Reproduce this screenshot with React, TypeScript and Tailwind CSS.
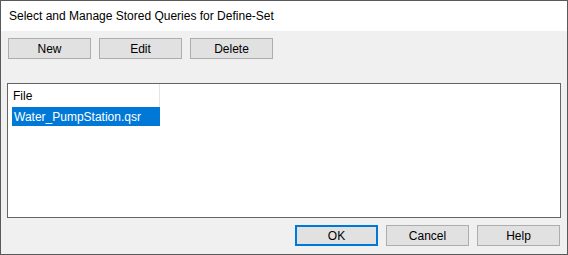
import type { ReactNode } from "react";

function DlgButton({
  children,
  focused = false,
}: {
  children: ReactNode;
  focused?: boolean;
}) {
  return (
    <button
      className={
        focused
          ? "w-[83px] h-[21px] bg-[#e1e1e1] border-2 border-[#0078d7] text-[12px] text-black leading-none flex items-center justify-center"
          : "w-[83px] h-[21px] bg-[#e1e1e1] border border-[#adadad] text-[12px] text-black leading-none flex items-center justify-center"
      }
    >
      {children}
    </button>
  );
}

export default function App() {
  return (
    <div
      className="w-[568px] h-[255px] border border-[#595959] bg-[#f0f0f0] flex flex-col"
      style={{ fontFamily: '"Liberation Sans", Arial, sans-serif' }}
    >
      {/* title bar */}
      <div className="h-[30px] bg-white flex items-center pl-[8px] text-[12px] text-black">
        Select and Manage Stored Queries for Define-Set
      </div>

      {/* top buttons */}
      <div className="flex gap-[8px] pl-[7px] pt-[7px]">
        <DlgButton>New</DlgButton>
        <DlgButton>Edit</DlgButton>
        <DlgButton>Delete</DlgButton>
      </div>

      {/* file list */}
      <div className="ml-[6px] mt-[24px] w-[554px] h-[135px] bg-white border border-[#646464] flex flex-col">
        <div className="flex h-[23px]">
          <div className="w-[152px] h-full border-r border-[#e5e5e5] flex items-center pl-[5px] text-[12px] text-black">
            File
          </div>
        </div>
        <div className="flex pl-[4px]">
          <div className="w-[148px] h-[19px] bg-[#0078d7] text-white text-[12px] flex items-center pl-[2px]">
            Water_PumpStation.qsr
          </div>
        </div>
      </div>

      {/* bottom buttons */}
      <div className="flex justify-end gap-[8px] pr-[7px] pt-[7px]">
        <DlgButton focused>OK</DlgButton>
        <DlgButton>Cancel</DlgButton>
        <DlgButton>Help</DlgButton>
      </div>
    </div>
  );
}
